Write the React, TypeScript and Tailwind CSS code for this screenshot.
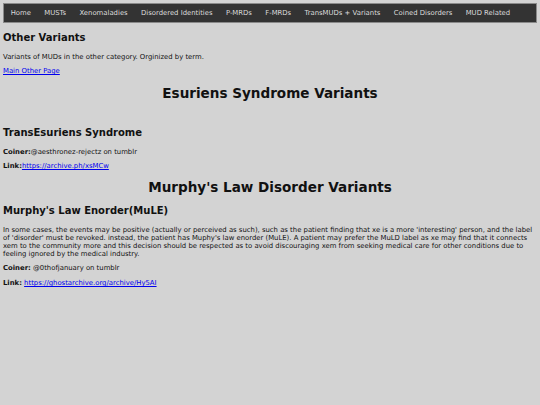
import React from "react";

const navItems = [
  "Home",
  "MUSTs",
  "Xenomaladies",
  "Disordered Identities",
  "P-MRDs",
  "F-MRDs",
  "TransMUDs + Variants",
  "Coined Disorders",
  "MUD Related",
];

export default function App() {
  return (
    <div
      className="min-h-[405px] w-[540px] bg-[#d3d3d3] px-[3px] pt-[3px] pb-4 text-[#111] text-[6.87px] leading-[8px]"
      style={{ fontFamily: '"DejaVu Sans", Verdana, sans-serif' }}
    >
      <nav className="flex h-[20px] items-center border border-[#8a8a8a] bg-[#333333]">
        {navItems.map((item) => (
          <span key={item} className="px-[6.67px] text-[6.87px] leading-[8px] text-[#dcdcdc] whitespace-nowrap">
            {item}
          </span>
        ))}
      </nav>

      <h2 className="mt-[9px] text-[10px] leading-[12px] font-bold">Other Variants</h2>
      <p className="mt-[9px]">Variants of MUDs in the other category. Orginized by term.</p>
      <p className="mt-[6px]">
        <a className="text-[#0000ee] underline">Main Other Page</a>
      </p>

      <h1 className="mt-[10px] text-center text-[13.55px] leading-[16px] font-bold">Esuriens Syndrome Variants</h1>

      <h2 className="mt-[26px] text-[10px] leading-[12px] font-bold">TransEsuriens Syndrome</h2>
      <p className="mt-[9px]">
        <b>Coiner:</b>@aesthronez-rejectz on tumblr
      </p>
      <p className="mt-[6px]">
        <b>Link:</b>
        <a className="text-[#0000ee] underline">https://archive.ph/xsMCw</a>
      </p>

      <h1 className="mt-[9px] text-center text-[13.55px] leading-[16px] font-bold">Murphy's Law Disorder Variants</h1>

      <h2 className="mt-[10px] text-[10px] leading-[12px] font-bold">Murphy's Law Enorder(MuLE)</h2>
      <p className="mt-[9px]">
        In some cases, the events may be positive (actually or perceived as such), such as the patient finding that xe is a more 'interesting' person, and the label of 'disorder' must be revoked. instead, the patient has Muphy's law enorder (MuLE). A patient may prefer the MuLD label as xe may find that it connects xem to the community more and this decision should be respected as to avoid discouraging xem from seeking medical care for other conditions due to feeling ignored by the medical industry.
      </p>
      <p className="mt-[6px]">
        <b>Coiner:</b> @0thofjanuary on tumblr
      </p>
      <p className="mt-[7px]">
        <b>Link:</b> <a className="text-[#0000ee] underline">https://ghostarchive.org/archive/Hy5AI</a>
      </p>
    </div>
  );
}
